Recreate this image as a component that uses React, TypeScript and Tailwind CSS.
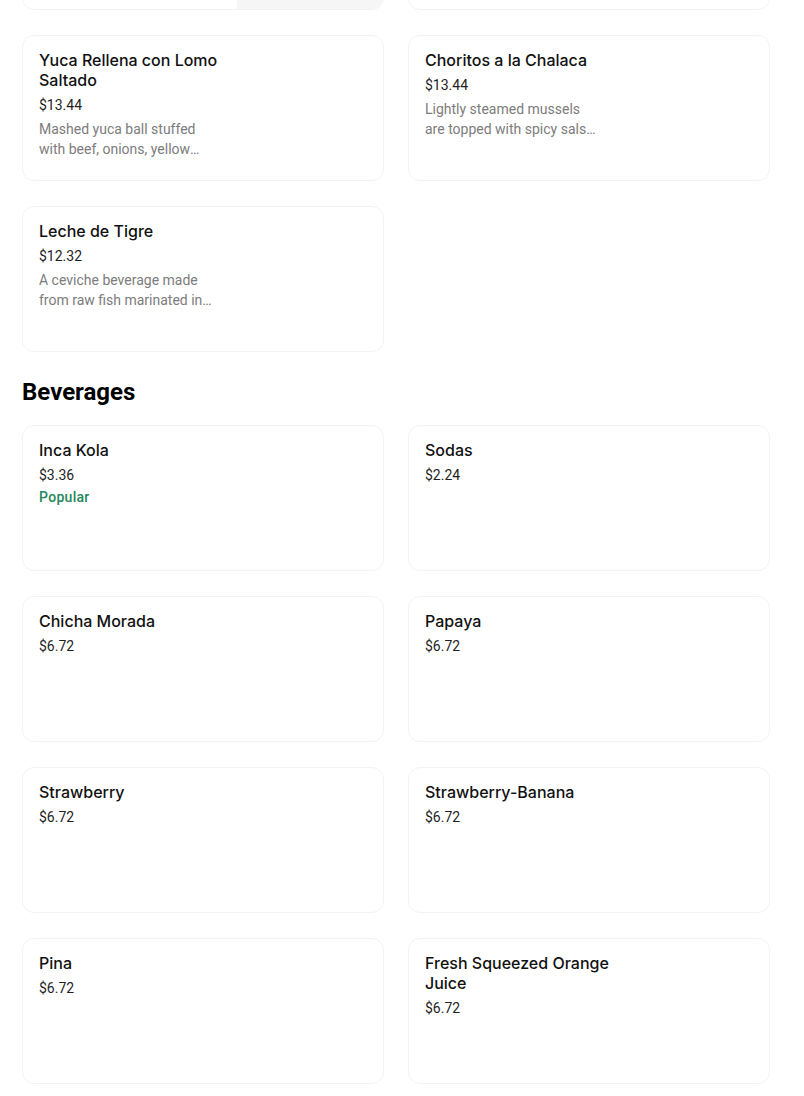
type Item = {
  name: string;
  price: string;
  desc?: string;
  popular?: boolean;
};

const appetizers: Item[] = [
  {
    name: "Yuca Rellena con Lomo Saltado",
    price: "$13.44",
    desc: "Mashed yuca ball stuffed with beef, onions, yellow peppers and tomatoes, served with salsa criolla.",
  },
  {
    name: "Choritos a la Chalaca",
    price: "$13.44",
    desc: "Lightly steamed mussels are topped with spicy salsa chalaca and lime juice.",
  },
  {
    name: "Leche de Tigre",
    price: "$12.32",
    desc: "A ceviche beverage made from raw fish marinated in lime juice, served in a glass.",
  },
];

const beverages: Item[] = [
  { name: "Inca Kola", price: "$3.36", popular: true },
  { name: "Sodas", price: "$2.24" },
  { name: "Chicha Morada", price: "$6.72" },
  { name: "Papaya", price: "$6.72" },
  { name: "Strawberry", price: "$6.72" },
  { name: "Strawberry-Banana", price: "$6.72" },
  { name: "Pina", price: "$6.72" },
  { name: "Fresh Squeezed Orange Juice", price: "$6.72" },
];

function MenuCard({ item }: { item: Item }) {
  return (
    <div className="flex h-[146px] overflow-hidden rounded-xl border border-[#f3f3f3] bg-white">
      <div className="w-[224px] shrink-0 pl-4 pt-[14px] pr-4 font-['Roboto','Liberation_Sans',sans-serif]">
        <div className="w-[190px] font-['Inter','Liberation_Sans',sans-serif] text-[16px] font-medium leading-5 text-[#111]">
          {item.name}
        </div>
        <div className="mt-[5px] text-[14px] leading-5 text-[#1f1f1f]">
          {item.price}
        </div>
        {item.desc && (
          <div className="mt-1 line-clamp-2 w-[176px] text-[14px] leading-5 text-[#7c7c7c]">
            {item.desc}
          </div>
        )}
        {item.popular && (
          <div className="mt-[2px] text-[14px] font-medium leading-5 tracking-[0.3px] text-[#24885a]">
            Popular
          </div>
        )}
      </div>
    </div>
  );
}

// cards of the previous row, scrolled mostly out of view
function PartialCard({ image }: { image?: boolean }) {
  return (
    <div className="flex h-[146px] justify-end overflow-hidden rounded-xl border border-[#f3f3f3] bg-white">
      {image && <div className="h-full w-[146px] bg-[#f6f6f6]" />}
    </div>
  );
}

export default function App() {
  return (
    <div className="min-h-[1096px] overflow-hidden bg-white font-['Roboto','Liberation_Sans',sans-serif]">
      <div className="ml-[22px] w-[748px]">
        {/* Appetizers (continued) */}
        <div className="-mt-[136px] grid grid-cols-2 gap-x-6 gap-y-[25px]">
          <PartialCard image />
          <PartialCard />
          {appetizers.map((item) => (
            <MenuCard key={item.name} item={item} />
          ))}
        </div>

        {/* Beverages */}
        <h2 className="mt-[24px] mb-[17px] text-[24px] font-bold leading-8 text-black">
          Beverages
        </h2>
        <div className="grid grid-cols-2 gap-x-6 gap-y-[25px] pb-6">
          {beverages.map((item) => (
            <MenuCard key={item.name} item={item} />
          ))}
        </div>
      </div>
    </div>
  );
}
